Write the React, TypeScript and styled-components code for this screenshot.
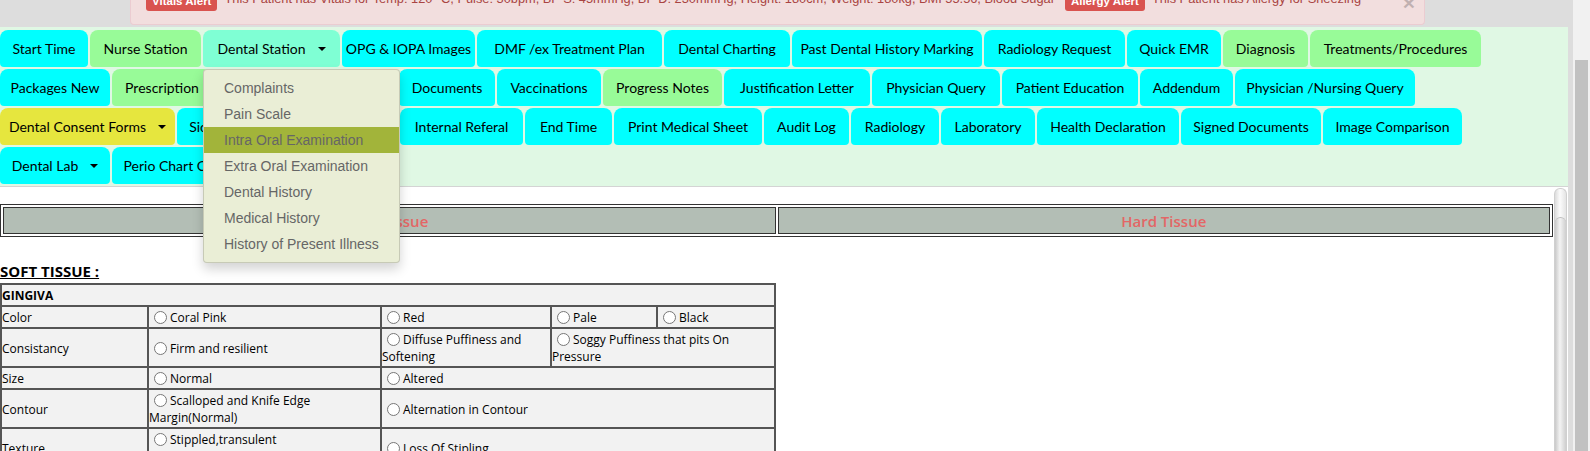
import React from 'react';
import styled, { createGlobalStyle } from 'styled-components';

const GlobalStyle = createGlobalStyle`
  html, body {
    margin: 0;
    padding: 0;
    background: #dddddd;
    overflow: hidden;
  }
  body {
    font-family: "Liberation Sans", Arial, sans-serif;
  }
`;

type Tone = 'cyan' | 'green' | 'aqua' | 'yellow';

const tones: Record<Tone, string> = {
  cyan: '#00ffff',
  green: '#98fb98',
  aqua: '#7fffd4',
  yellow: '#e6e63e',
};

const Page = styled.div`
  display: flex;
  width: 1590px;
  height: 451px;
  overflow: hidden;
`;

const Main = styled.div`
  flex: 1;
  min-width: 0;
  display: flex;
  flex-direction: column;
  padding-right: 5px;
  background: #dddddd;
`;

const PageScroll = styled.div`
  width: 17px;
  box-sizing: border-box;
  padding: 60px 2px 0;
  background: #f1f1f1;
`;

const PageThumb = styled.div`
  height: 100%;
  background: #c1c1c1;
`;

/* alert strip, page is scrolled so only the bottom of it shows */
const AlertStrip = styled.div`
  height: 27px;
  flex-shrink: 0;
  display: flex;
  align-items: flex-end;
  padding-left: 130px;
  overflow: hidden;
`;

const AlertBox = styled.div`
  position: relative;
  width: 1295px;
  box-sizing: border-box;
  margin-bottom: 2px;
  padding: 0 35px 13px 15px;
  background: #f2dede;
  border: 1px solid #ebccd1;
  border-top: none;
  border-radius: 0 0 4px 4px;
  color: #a94442;
  font-size: 12.8px;
  line-height: 20px;
  white-space: nowrap;
`;

const AlertLabel = styled.span`
  display: inline-block;
  padding: 3px 6px 4px;
  margin-right: 7px;
  font-size: 11.5px;
  font-weight: bold;
  line-height: 1;
  color: #fff;
  background: #d9534f;
  border-radius: 3px;
  vertical-align: -2px;
`;

const AlertText = styled.span<{ $gap?: number }>`
  margin-right: ${p => p.$gap ?? 0}px;
`;

const Close = styled.span`
  position: absolute;
  right: 9px;
  bottom: 11px;
  font-size: 21px;
  font-weight: bold;
  line-height: 1;
  color: #000;
  opacity: 0.2;
`;

/* tabs */
const TabPanel = styled.div`
  flex-shrink: 0;
  padding-top: 3px;
  background: #e0f8e4;
  border-bottom: 1px solid #d4d4d4;
`;

const TabRow = styled.div`
  display: flex;
  gap: 2px;
  margin-bottom: 2px;
`;

const Tab = styled.div<{ $tone: Tone; $w: number }>`
  position: relative;
  flex: 0 0 auto;
  width: ${p => p.$w}px;
  height: 37px;
  display: flex;
  align-items: center;
  justify-content: center;
  background: ${p => tones[p.$tone]};
  border-radius: 8px 8px 4px 4px;
  font-family: Lato, "Liberation Sans", sans-serif;
  font-size: 14px;
  color: #000;
  white-space: nowrap;
`;

const Caret = styled.span`
  width: 0;
  height: 0;
  margin-left: 12px;
  border-top: 4px solid #000;
  border-left: 4px solid transparent;
  border-right: 4px solid transparent;
`;

const Menu = styled.ul`
  position: absolute;
  top: 100%;
  left: 0;
  z-index: 10;
  margin: 2px 0 0;
  padding: 5px 0;
  list-style: none;
  min-width: 160px;
  background: #eaeed6;
  border: 1px solid rgba(0, 0, 0, 0.15);
  border-radius: 4px;
  box-shadow: 0 6px 12px rgba(0, 0, 0, 0.175);
  font-family: "Liberation Sans", Arial, sans-serif;
  font-size: 14px;
`;

const MenuItem = styled.li<{ $active?: boolean }>`
  padding: 3px 20px;
  line-height: 20px;
  color: #666;
  white-space: nowrap;
  background: ${p => (p.$active ? '#a2b43a' : 'transparent')};
`;

/* content frame */
const Content = styled.div`
  flex: 1;
  min-height: 0;
  display: flex;
  background: #fff;
`;

const Frame = styled.div`
  flex: 1;
  min-width: 0;
  padding-top: 17px;
  overflow: hidden;
  font-family: "Open Sans", sans-serif;
`;

const FrameTrack = styled.div`
  width: 11px;
  margin: 1px 1px 0 1px;
  display: flex;
  flex-direction: column;
  padding-top: 28px;
  border: 1px solid #d0d0d0;
  border-bottom: none;
  border-radius: 6px 6px 0 0;
  background: linear-gradient(to right, #dcdcdc, #fbfbfb 45%, #e4e4e4);
`;

const FrameThumb = styled.div`
  flex: 1;
  border-top: 1px solid #bdbdbd;
  border-radius: 6px 6px 0 0;
  background: linear-gradient(to right, #c9c9c9, #f3f3f3 45%, #cfcfcf);
`;

const SectionTable = styled.table`
  width: 1553px;
  border: 1px solid #333;
  border-spacing: 2px;
`;

const SectionHead = styled.th`
  width: 50%;
  height: 25px;
  padding: 0;
  background: #b3beb5;
  border: 1px solid #333;
  color: #e36666;
  font-size: 15px;
  font-weight: 600;
  text-align: center;
`;

const SoftTitle = styled.div`
  margin: 24px 0 2px;
  font-size: 15px;
  line-height: 20px;
  font-weight: 700;
  color: #000;
  text-decoration: underline;
`;

const GridTable = styled.table`
  width: 776px;
  table-layout: fixed;
  border-collapse: separate;
  border-spacing: 0;
  border: 1px solid #555;
  background: #f2f2f2;
  font-size: 12px;
  line-height: 17px;
  color: #000;
`;

const Col = styled.col<{ $w: number }>`
  width: ${p => p.$w}px;
`;

const Cell = styled.td<{ $bold?: boolean }>`
  padding: 2px 0 1px;
  border: 1px solid #555;
  vertical-align: middle;
  font-weight: ${p => (p.$bold ? 700 : 400)};
`;

const Radio = styled.input.attrs({ type: 'radio' })`
  margin: 0 3px 0 5px;
  width: 13px;
  height: 13px;
  vertical-align: -2px;
`;

type TabDef = { label: string; tone: Tone; w: number; caret?: boolean; menu?: boolean };

const rows: TabDef[][] = [
  [
    { label: 'Start Time', tone: 'cyan', w: 88 },
    { label: 'Nurse Station', tone: 'green', w: 111 },
    { label: 'Dental Station', tone: 'aqua', w: 137, caret: true, menu: true },
    { label: 'OPG & IOPA Images', tone: 'cyan', w: 133 },
    { label: 'DMF /ex Treatment Plan', tone: 'cyan', w: 185 },
    { label: 'Dental Charting', tone: 'cyan', w: 126 },
    { label: 'Past Dental History Marking', tone: 'cyan', w: 190 },
    { label: 'Radiology Request', tone: 'cyan', w: 141 },
    { label: 'Quick EMR', tone: 'cyan', w: 94 },
    { label: 'Diagnosis', tone: 'green', w: 85 },
    { label: 'Treatments/Procedures', tone: 'green', w: 171 },
  ],
  [
    { label: 'Packages New', tone: 'cyan', w: 110 },
    { label: 'Prescription', tone: 'green', w: 100 },
    { label: 'Medical Certificate Form', tone: 'cyan', w: 183 },
    { label: 'Documents', tone: 'cyan', w: 96 },
    { label: 'Vaccinations', tone: 'cyan', w: 104 },
    { label: 'Progress Notes', tone: 'green', w: 119 },
    { label: 'Justification Letter', tone: 'cyan', w: 146 },
    { label: 'Physician Query', tone: 'cyan', w: 128 },
    { label: 'Patient Education', tone: 'cyan', w: 136 },
    { label: 'Addendum', tone: 'cyan', w: 93 },
    { label: 'Physician /Nursing Query', tone: 'cyan', w: 180 },
  ],
  [
    { label: 'Dental Consent Forms', tone: 'yellow', w: 175, caret: true },
    { label: 'Sick Leave', tone: 'cyan', w: 88 },
    { label: 'Referral Letter', tone: 'cyan', w: 131 },
    { label: 'Internal Referal', tone: 'cyan', w: 123 },
    { label: 'End Time', tone: 'cyan', w: 87 },
    { label: 'Print Medical Sheet', tone: 'cyan', w: 148 },
    { label: 'Audit Log', tone: 'cyan', w: 85 },
    { label: 'Radiology', tone: 'cyan', w: 88 },
    { label: 'Laboratory', tone: 'cyan', w: 94 },
    { label: 'Health Declaration', tone: 'cyan', w: 142 },
    { label: 'Signed Documents', tone: 'cyan', w: 140 },
    { label: 'Image Comparison', tone: 'cyan', w: 139 },
  ],
  [
    { label: 'Dental Lab', tone: 'cyan', w: 110, caret: true },
    { label: 'Perio Chart Comparison', tone: 'cyan', w: 170 },
  ],
];

const menuItems = [
  'Complaints',
  'Pain Scale',
  'Intra Oral Examination',
  'Extra Oral Examination',
  'Dental History',
  'Medical History',
  'History of Present Illness',
];

const colWidths = [147, 233, 170, 106, 118];

const Opt: React.FC<{ name: string; children: React.ReactNode }> = ({ name, children }) => (
  <>
    <Radio name={name} />
    {children}
  </>
);

export default function App() {
  return (
    <>
      <GlobalStyle />
      <Page>
        <Main>
          <AlertStrip>
            <AlertBox>
              <AlertLabel>Vitals Alert</AlertLabel>
              <AlertText $gap={10}>
                This Patient has Vitals for Temp: 120 °C, Pulse: 30bpm, BP S: 45mmHg, BP D: 230mmHg, Height: 180cm,
                Weight: 180kg, BMI 55.56, Blood Sugar
              </AlertText>
              <AlertLabel>Allergy Alert</AlertLabel>
              <AlertText>This Patient has Allergy for Sneezing</AlertText>
              <Close>×</Close>
            </AlertBox>
          </AlertStrip>

          <TabPanel>
            {rows.map((row, ri) => (
              <TabRow key={ri}>
                {row.map(tab => (
                  <Tab key={tab.label} $tone={tab.tone} $w={tab.w}>
                    {tab.label}
                    {tab.caret && <Caret />}
                    {tab.menu && (
                      <Menu>
                        {menuItems.map(item => (
                          <MenuItem key={item} $active={item === 'Intra Oral Examination'}>
                            {item}
                          </MenuItem>
                        ))}
                      </Menu>
                    )}
                  </Tab>
                ))}
              </TabRow>
            ))}
          </TabPanel>

          <Content>
            <Frame>
              <SectionTable>
                <tbody>
                  <tr>
                    <SectionHead>Soft Tissue</SectionHead>
                    <SectionHead>Hard Tissue</SectionHead>
                  </tr>
                </tbody>
              </SectionTable>

              <SoftTitle>SOFT TISSUE :</SoftTitle>

              <GridTable>
                <colgroup>
                  {colWidths.map((w, i) => (
                    <Col key={i} $w={w} />
                  ))}
                </colgroup>
                <tbody>
                  <tr>
                    <Cell colSpan={5} $bold>GINGIVA</Cell>
                  </tr>
                  <tr>
                    <Cell>Color</Cell>
                    <Cell><Opt name="color">Coral Pink</Opt></Cell>
                    <Cell><Opt name="color">Red</Opt></Cell>
                    <Cell><Opt name="color">Pale</Opt></Cell>
                    <Cell><Opt name="color">Black</Opt></Cell>
                  </tr>
                  <tr>
                    <Cell>Consistancy</Cell>
                    <Cell><Opt name="consistancy">Firm and resilient</Opt></Cell>
                    <Cell><Opt name="consistancy">Diffuse Puffiness and Softening</Opt></Cell>
                    <Cell colSpan={2}><Opt name="consistancy">Soggy Puffiness that pits On Pressure</Opt></Cell>
                  </tr>
                  <tr>
                    <Cell>Size</Cell>
                    <Cell><Opt name="size">Normal</Opt></Cell>
                    <Cell colSpan={3}><Opt name="size">Altered</Opt></Cell>
                  </tr>
                  <tr>
                    <Cell>Contour</Cell>
                    <Cell><Opt name="contour">Scalloped and Knife Edge Margin(Normal)</Opt></Cell>
                    <Cell colSpan={3}><Opt name="contour">Alternation in Contour</Opt></Cell>
                  </tr>
                  <tr>
                    <Cell>Texture</Cell>
                    <Cell>
                      <Opt name="texture">Stippled,transulent</Opt>
                      <br />
                      &nbsp;
                    </Cell>
                    <Cell colSpan={3}><Opt name="texture">Loss Of Stipling</Opt></Cell>
                  </tr>
                </tbody>
              </GridTable>
            </Frame>
            <FrameTrack>
              <FrameThumb />
            </FrameTrack>
          </Content>
        </Main>
        <PageScroll>
          <PageThumb />
        </PageScroll>
      </Page>
    </>
  );
}
